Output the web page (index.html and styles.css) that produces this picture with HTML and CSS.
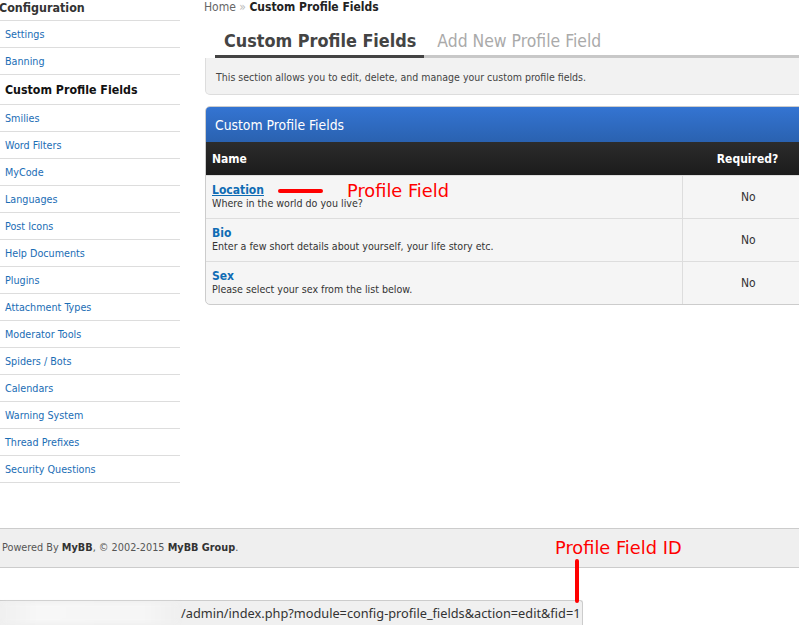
FILE: index.html
```html
<!DOCTYPE html>
<html>
<head>
<meta charset="utf-8">
<title>Custom Profile Fields</title>
<link rel="stylesheet" href="styles.css">
</head>
<body>
<div class="page">
  <aside class="sidebar">
    <h2 class="side-title">Configuration</h2>
    <ul class="side-menu">
      <li><a href="#">Settings</a></li>
      <li><a href="#">Banning</a></li>
      <li class="active">Custom Profile Fields</li>
      <li><a href="#">Smilies</a></li>
      <li><a href="#">Word Filters</a></li>
      <li><a href="#">MyCode</a></li>
      <li><a href="#">Languages</a></li>
      <li><a href="#">Post Icons</a></li>
      <li><a href="#">Help Documents</a></li>
      <li><a href="#">Plugins</a></li>
      <li><a href="#">Attachment Types</a></li>
      <li><a href="#">Moderator Tools</a></li>
      <li><a href="#">Spiders / Bots</a></li>
      <li><a href="#">Calendars</a></li>
      <li><a href="#">Warning System</a></li>
      <li><a href="#">Thread Prefixes</a></li>
      <li><a href="#">Security Questions</a></li>
    </ul>
  </aside>
  <main class="content">
    <div class="breadcrumb"><span class="home">Home</span> <span class="sep">»</span> <b>Custom Profile Fields</b></div>
    <nav class="tabs">
      <span class="tab active">Custom Profile Fields</span>
      <span class="tab">Add New Profile Field</span>
    </nav>
    <div class="desc">This section allows you to edit, delete, and manage your custom profile fields.</div>
    <div class="table-box">
      <div class="tb-title">Custom Profile Fields</div>
      <table class="grid">
        <thead>
          <tr><th class="c-name">Name</th><th class="c-req">Required?</th></tr>
        </thead>
        <tbody>
          <tr>
            <td class="c-name"><a href="#" class="fname hover">Location</a><div class="fdesc">Where in the world do you live?</div></td>
            <td class="c-req">No</td>
          </tr>
          <tr>
            <td class="c-name"><a href="#" class="fname">Bio</a><div class="fdesc">Enter a few short details about yourself, your life story etc.</div></td>
            <td class="c-req">No</td>
          </tr>
          <tr>
            <td class="c-name"><a href="#" class="fname">Sex</a><div class="fdesc">Please select your sex from the list below.</div></td>
            <td class="c-req">No</td>
          </tr>
        </tbody>
      </table>
    </div>
  </main>
</div>
<footer class="footer">Powered By <b>MyBB</b>, © 2002-2015 <b>MyBB Group</b>.</footer>

<div class="statusbar"><span class="blur"></span><span class="url">/admin/index.php?module=config-profile_fields&amp;action=edit&amp;fid=1</span></div>

<div class="anno-line anno-line-h"></div>
<div class="anno-text anno-field">Profile Field</div>
<div class="anno-text anno-id">Profile Field ID</div>
<div class="anno-line anno-line-v"></div>
</body>
</html>
```

FILE: styles.css
```css
html, body {
  margin: 0;
  padding: 0;
  overflow: hidden;
  background: #fff;
}
body {
  width: 799px;
  height: 625px;
  position: relative;
  font-family: "DejaVu Sans Condensed", "DejaVu Sans", sans-serif;
  font-stretch: condensed;
  font-size: 11px;
  color: #333;
}
.page {
  display: flex;
  width: 830px;
}
.sidebar {
  width: 180px;
  flex: none;
}
.side-title {
  margin: 0;
  height: 21px;
  box-sizing: border-box;
  border-bottom: 1px solid #ddd;
  font-size: 12.4px;
  font-weight: bold;
  color: #333;
  line-height: 15px;
  margin-left: -1px;
}
.side-menu {
  list-style: none;
  margin: 0;
  padding: 0;
}
.side-menu li {
  height: 27px;
  box-sizing: border-box;
  border-bottom: 1px solid #ddd;
  padding-left: 5px;
  display: flex;
  align-items: center;
  padding-top: 1px;
}
.side-menu a {
  color: #1a6db5;
  text-decoration: none;
  font-size: 10.7px;
}
.side-menu li.active {
  height: 30px;
  font-size: 12.3px;
  font-weight: bold;
  color: #111;
}
.content {
  margin-left: 25px;
  width: 612px;
  flex: none;
}
.breadcrumb {
  font-size: 12px;
  line-height: 14px;
  margin-left: -1px;
  color: #666;
}
.breadcrumb .sep {
  color: #bbb;
}
.breadcrumb b {
  color: #222;
}
.tabs {
  margin-top: 16px;
  margin-left: 10px;
  display: flex;
  border-bottom: 3px solid #c8c8c8;
  height: 25px;
}
.tab {
  font-size: 17.4px;
  line-height: 22px;
  color: #aaa;
  padding: 0 8px 0 13px;
  margin-bottom: -3px;
}
.tab.active {
  font-size: 17.85px;
  color: #444;
  font-weight: bold;
  border-bottom: 3px solid #444;
  padding: 0 8px 0 9px;
}
.desc {
  background: #f2f2f2;
  border: 1px solid #ddd;
  border-top: none;
  border-bottom-left-radius: 5px;
  height: 37px;
  box-sizing: border-box;
  padding: 13px 10px 0;
  color: #444;
  font-size: 10.5px;
}
.table-box {
  margin-top: 11px;
  border: 1px solid #ccc;
  border-radius: 5px 0 0 5px;
  overflow: hidden;
  background: #f5f5f5;
}
.tb-title {
  height: 35px;
  box-sizing: border-box;
  background: linear-gradient(#3474d2, #2a62b0);
  color: #fff;
  font-size: 13.8px;
  line-height: 35px;
  padding: 1px 0 0 9px;
}
.grid {
  width: 100%;
  border-collapse: collapse;
}
.grid th {
  background: linear-gradient(#2c2c2c, #1b1b1b);
  color: #fff;
  font-size: 12px;
  font-weight: bold;
  height: 33px;
  box-sizing: border-box;
  padding: 1px 0 0;
  text-align: left;
}
.grid th.c-name {
  padding-left: 6px;
}
.grid th.c-req {
  text-align: center;
  width: 134px;
  padding-right: 3px;
}
.grid td {
  height: 43px;
  box-sizing: border-box;
  border-top: 1px solid #ddd;
  padding: 0;
  vertical-align: middle;
}
.grid td.c-name {
  padding-left: 6px;
  border-right: 1px solid #ddd;
}
.grid td.c-req {
  text-align: center;
  font-size: 12px;
  color: #333;
  padding-top: 1px;
  padding-right: 2px;
}
.fname {
  font-size: 12px;
  font-weight: bold;
  color: #0f6cb4;
  text-decoration: none;
  line-height: 14px;
}
.fname.hover {
  text-decoration: underline;
}
.fdesc {
  font-size: 10.6px;
  color: #333;
  line-height: 13px;
}
.footer {
  margin-top: 45px;
  height: 40px;
  box-sizing: border-box;
  border-top: 1px solid #ccc;
  border-bottom: 1px solid #ccc;
  background: #efefef;
  color: #555;
  font-size: 10.8px;
  line-height: 38px;
  padding-left: 2px;
}
.footer b {
  color: #333;
}
.statusbar {
  position: absolute;
  left: 0;
  top: 600px;
  width: 583px;
  height: 25px;
  box-sizing: border-box;
  border-top: 1px solid #ccc;
  border-right: 1px solid #ccc;
  border-top-right-radius: 3px;
  background: #f0f0f0;
  display: flex;
  align-items: center;
}
.blur {
  width: 175px;
  height: 20px;
  margin-left: 3px;
  background: linear-gradient(90deg, #f0f0f0, #f7f7f7 20%, #f6f6f6 80%, #efefef);
  filter: blur(2px);
  flex: none;
}
.url {
  font-family: "Noto Sans", "DejaVu Sans", sans-serif;
  font-stretch: normal;
  font-size: 12.75px;
  color: #333;
  margin-left: 3px;
  white-space: nowrap;
}
.anno-line {
  position: absolute;
  background: #f00;
  border-radius: 2px;
}
.anno-line-h {
  left: 278px;
  top: 189px;
  width: 45px;
  height: 4px;
}
.anno-line-v {
  left: 575px;
  top: 559px;
  width: 4px;
  height: 44px;
}
.anno-text {
  position: absolute;
  color: #f00;
  font-family: "DejaVu Sans", sans-serif;
  font-stretch: normal;
  font-size: 17.8px;
  line-height: 20px;
  white-space: nowrap;
}
.anno-field {
  left: 347px;
  top: 181px;
}
.anno-id {
  left: 555px;
  top: 538px;
}
```
